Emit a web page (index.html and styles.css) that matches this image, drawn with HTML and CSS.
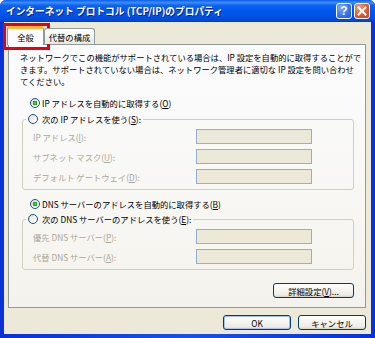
FILE: index.html
```html
<!DOCTYPE html>
<html lang="ja">
<head>
<meta charset="utf-8">
<title>インターネット プロトコル (TCP/IP)のプロパティ</title>
<link rel="stylesheet" href="styles.css">
</head>
<body>
<div class="window">
  <div class="titlebar">
    <span class="title">インターネット プロトコル (TCP/IP)のプロパティ</span>
    <div class="tb-buttons">
      <span class="tb-btn help">?</span>
      <span class="tb-btn close">
        <svg width="10" height="10" viewBox="0 0 10 10"><path d="M1.5 1.5 L8.5 8.5 M8.5 1.5 L1.5 8.5" stroke="#fff" stroke-width="2" stroke-linecap="square"/></svg>
      </span>
    </div>
  </div>
  <div class="frame">
    <div class="tabs">
      <div class="tab active">全般</div>
      <div class="tab">代替の構成</div>
    </div>
    <div class="panel">
      <p class="desc">ネットワークでこの機能がサポートされている場合は、IP 設定を自動的に取得することがで<br>きます。サポートされていない場合は、ネットワーク管理者に適切な IP 設定を問い合わせ<br>てください。</p>
      <div class="radio-row"><span class="radio checked"></span><span>IP アドレスを自動的に取得する(<u>O</u>)</span></div>
      <fieldset class="group g1">
        <legend><span class="radio"></span><span>次の IP アドレスを使う(<u>S</u>):</span></legend>
        <div class="field"><span class="lbl">IP アドレス(<u>I</u>):</span><span class="input"></span></div>
        <div class="field"><span class="lbl">サブネット マスク(<u>U</u>):</span><span class="input"></span></div>
        <div class="field"><span class="lbl">デフォルト ゲートウェイ(<u>D</u>):</span><span class="input"></span></div>
      </fieldset>
      <div class="radio-row dns"><span class="radio checked"></span><span>DNS サーバーのアドレスを自動的に取得する(<u>B</u>)</span></div>
      <fieldset class="group g2">
        <legend><span class="radio"></span><span>次の DNS サーバーのアドレスを使う(<u>E</u>):</span></legend>
        <div class="field"><span class="lbl">優先 DNS サーバー(<u>P</u>):</span><span class="input"></span></div>
        <div class="field"><span class="lbl">代替 DNS サーバー(<u>A</u>):</span><span class="input"></span></div>
      </fieldset>
      <div class="adv-row"><span class="btn adv">詳細設定(<u>V</u>)...</span></div>
    </div>
    <div class="buttons">
      <span class="btn default">OK</span>
      <span class="btn">キャンセル</span>
    </div>
  </div>
  <div class="highlight"></div>
</div>
</body>
</html>
```
FILE: styles.css
```css
* { box-sizing: border-box; }
html, body { margin: 0; padding: 0; background: #ffffff; }
body {
  font-family: "Noto Sans CJK JP", "Noto Sans", sans-serif;
  font-size: 8.3px;
  line-height: 10px;
  color: #000;
}
.window {
  position: relative;
  width: 375px;
  height: 338px;
  display: flex;
  flex-direction: column;
  border-radius: 6px 6px 0 0;
  overflow: hidden;
  background: linear-gradient(90deg, #0831D9, #1750E8 50%, #0831D9);
}
.titlebar {
  flex: none;
  height: 22px;
  display: flex;
  align-items: center;
  justify-content: space-between;
  padding: 0 5px 0 6px;
  background: linear-gradient(#0A5FEA 0%, #3D8CF7 12%, #0D62EE 25%, #0058EE 45%, #0053E6 70%, #0049DA 90%, #0040C8 100%);
}
.title {
  color: #fff;
  font-weight: bold;
  font-size: 9.7px;
  line-height: 12px;
  white-space: nowrap;
  text-shadow: 1px 1px 0 #0A1E8C;
}
.tb-buttons { display: flex; gap: 2px; }
.tb-btn {
  width: 16px;
  height: 16px;
  border: 1px solid #fff;
  border-radius: 3px;
  display: flex;
  align-items: center;
  justify-content: center;
}
.help {
  background: radial-gradient(circle at 30% 25%, #7FAAF7, #3A76EC 55%, #1F56D8);
  color: #fff;
  font-family: "Liberation Sans", sans-serif;
  font-weight: bold;
  font-size: 12px;
  line-height: 12px;
}
.close {
  background: radial-gradient(circle at 30% 25%, #F0A080, #E0582E 55%, #C8401A);
}
.frame {
  flex: 1;
  margin: 0 4px 4px 4px;
  background: #ECE9D8;
  padding: 4px 5px 0 4px;
  display: flex;
  flex-direction: column;
}
.tabs {
  flex: none;
  height: 19px;
  margin-bottom: -1px;
  display: flex;
  align-items: flex-end;
  position: relative;
  z-index: 1;
}
.tab {
  height: 16px;
  margin-bottom: 1px;
  padding: 0 4px;
  border: 1px solid #919B9C;
  border-bottom: none;
  border-radius: 3px 3px 0 0;
  background: linear-gradient(#FFFFFF, #F3F3EF 60%, #E8E7E0);
  display: flex;
  align-items: center;
  justify-content: center;
  white-space: nowrap;
  width: 51px;
}
.tab.active {
  height: 19px;
  margin-bottom: 0;
  margin-left: -1px;
  width: 37px;
  background: #FCFCFE;
  border-top: 3px solid #F5B73A;
  padding-bottom: 1px;
}
.panel {
  flex: none;
  height: 264px;
  border: 1px solid #919B9C;
  background: linear-gradient(#FCFCFE, #F6F5F0 80%, #F3F2EC);
  padding: 6px 11px 0 11px;
}
.desc {
  margin: 0;
  line-height: 12px;
  white-space: nowrap;
}
.radio-row {
  display: flex;
  align-items: center;
  gap: 2px;
  height: 10px;
  margin: 11px 0 0 10px;
  white-space: nowrap;
}
.radio-row.dns { margin-top: 9px; }
.radio {
  flex: none;
  width: 10px;
  height: 10px;
  border: 1px solid #1C5180;
  border-radius: 50%;
  background: linear-gradient(135deg, #DCDBD3, #FFFFFF 80%);
}
.radio.checked {
  background:
    radial-gradient(circle at center, #6EDB6E 0, #2DB52D 1.3px, #1E9A1E 2.1px, transparent 2.6px),
    linear-gradient(135deg, #DCDBD3, #FFFFFF 80%);
}
.group {
  width: 332px;
  margin: 6px 0 0 2px;
  padding: 5px 10px 5px 10px;
  border: 1px solid #D0D0BF;
  border-radius: 3px;
  min-width: 0;
}
.g2 { margin-top: 5px; }
.group legend {
  display: flex;
  align-items: center;
  gap: 4px;
  height: 10px;
  padding: 0 2px;
  margin-left: -7px;
  white-space: nowrap;
}
.field {
  display: flex;
  align-items: center;
  height: 15px;
}
.field + .field { margin-top: 5px; }
.lbl {
  width: 163px;
  color: #ACA899;
  white-space: nowrap;
}
.input {
  width: 116px;
  height: 15px;
  border: 1px solid #94AED2;
  background: #ECE9D8;
}
.adv-row {
  width: 332px;
  margin: 13px 0 0 2px;
  display: flex;
  justify-content: flex-end;
}
.btn {
  display: flex;
  align-items: center;
  justify-content: center;
  height: 15px;
  border: 1px solid #003C74;
  border-radius: 3px;
  background: linear-gradient(#FFFFFF, #F4F3EE 50%, #ECEBE6 85%, #D6D0C5);
  white-space: nowrap;
}
.btn.adv { width: 81px; }
.buttons {
  flex: none;
  margin-top: 7px;
  display: flex;
  justify-content: flex-end;
  gap: 7px;
}
.buttons .btn { width: 68px; }
.btn.default { box-shadow: inset 0 0 0 1px #A9C2EE; }
.highlight {
  position: absolute;
  left: 3px;
  top: 23px;
  width: 47px;
  height: 27px;
  border: 3px solid #E60012;
}
```
